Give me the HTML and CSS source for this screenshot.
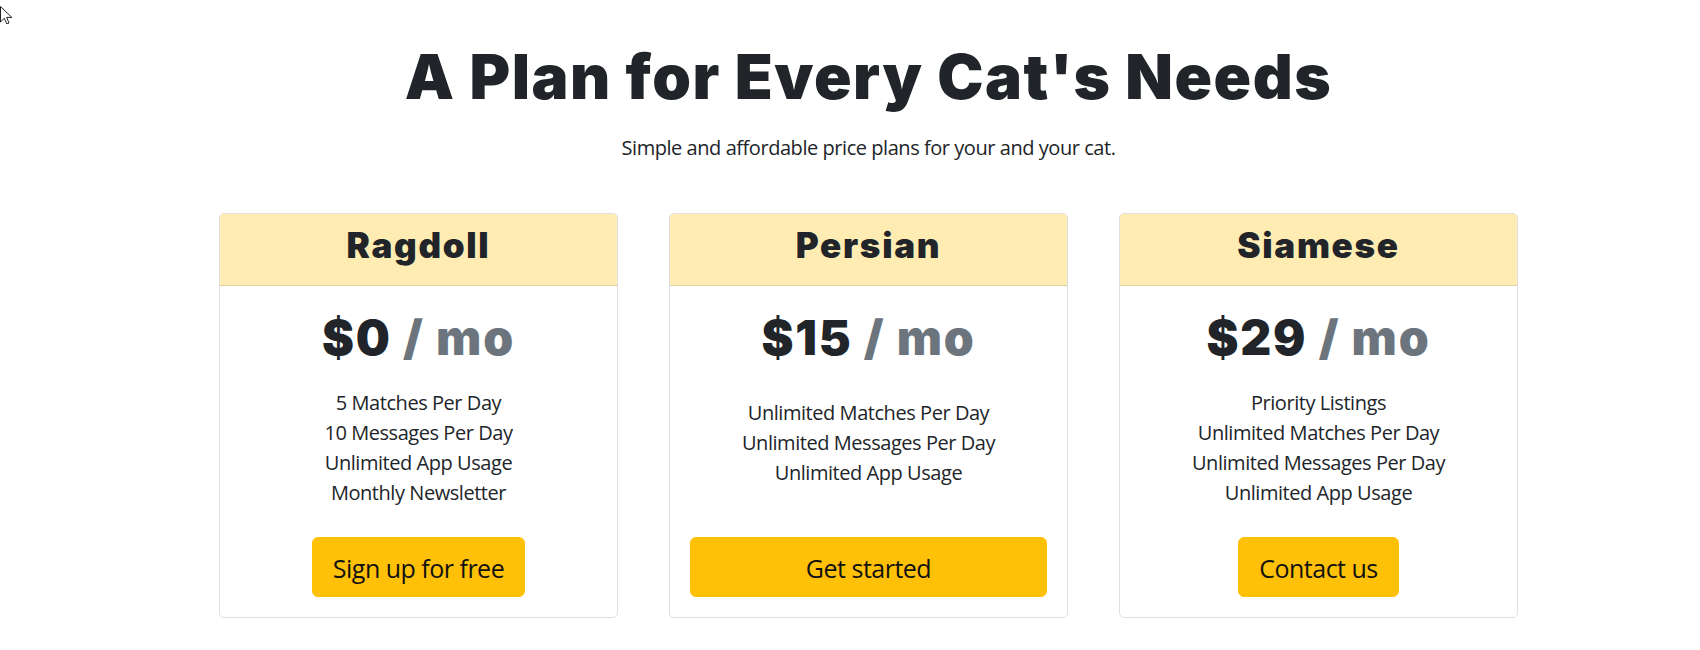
FILE: index.html
```html
<!DOCTYPE html>
<html lang="en">
<head>
<meta charset="utf-8">
<title>Pricing</title>
<link rel="stylesheet" href="styles.css">
</head>
<body>
<svg class="cursor" width="14" height="24" viewBox="0 0 14 24" aria-hidden="true">
  <path d="M0.5 6.5 L0.5 22 L4.3 18.3 L6.8 24 L9 23 L6.6 17.4 L11.8 17.4 Z" fill="#fff" stroke="#222" stroke-width="1" stroke-linejoin="round"/>
</svg>
<main class="page">
  <header class="intro">
    <h1 class="intro-title">A Plan for Every Cat's Needs</h1>
    <p class="intro-sub">Simple and affordable price plans for your and your cat.</p>
  </header>
  <section class="plans">
    <article class="plan">
      <div class="plan-head"><h3 class="plan-name">Ragdoll</h3></div>
      <div class="plan-body">
        <h2 class="plan-price">$0 <span class="per">/ mo</span></h2>
        <ul class="features">
          <li>5 Matches Per Day</li>
          <li>10 Messages Per Day</li>
          <li>Unlimited App Usage</li>
          <li>Monthly Newsletter</li>
        </ul>
        <button class="btn">Sign up for free</button>
      </div>
    </article>
    <article class="plan">
      <div class="plan-head"><h3 class="plan-name">Persian</h3></div>
      <div class="plan-body">
        <h2 class="plan-price">$15 <span class="per">/ mo</span></h2>
        <ul class="features">
          <li>Unlimited Matches Per Day</li>
          <li>Unlimited Messages Per Day</li>
          <li>Unlimited App Usage</li>
        </ul>
        <button class="btn btn-block">Get started</button>
      </div>
    </article>
    <article class="plan">
      <div class="plan-head"><h3 class="plan-name">Siamese</h3></div>
      <div class="plan-body">
        <h2 class="plan-price">$29 <span class="per">/ mo</span></h2>
        <ul class="features">
          <li>Priority Listings</li>
          <li>Unlimited Matches Per Day</li>
          <li>Unlimited Messages Per Day</li>
          <li>Unlimited App Usage</li>
        </ul>
        <button class="btn">Contact us</button>
      </div>
    </article>
  </section>
</main>
</body>
</html>
```

FILE: styles.css
```css
* { box-sizing: border-box; }

html, body {
  margin: 0;
  background: #fff;
}

body {
  font-family: "Open Sans", "Noto Sans", sans-serif;
  font-size: 20px;
  line-height: 30px;
  letter-spacing: -0.45px;
  color: #212529;
  padding-left: 37px;
}

.cursor {
  position: absolute;
  left: 0;
  top: 0;
}

.page {
  width: 1299px;
  margin: 0 auto;
  padding-top: 38px;
}

.intro {
  text-align: center;
}

.intro-title {
  margin: 0;
  font-family: "Inter", "Liberation Sans", sans-serif;
  font-weight: 900;
  font-size: 62px;
  line-height: 77px;
  letter-spacing: 1.5px;
  color: #212529;
}

.intro-sub {
  margin: 18px 0 0;
  font-size: 20px;
  line-height: 30px;
}

.plans {
  margin-top: 50px;
  display: grid;
  grid-template-columns: repeat(3, 399px);
  column-gap: 51px;
  align-items: stretch;
}

.plan {
  display: flex;
  flex-direction: column;
  border: 1px solid #dfdfdf;
  border-radius: 5px;
  overflow: hidden;
  text-align: center;
}

.plan-head {
  background: #ffecb3;
  border-bottom: 1px solid #dfcf9d;
  padding: 10px 20px 19px;
}

.plan-name {
  margin: 0;
  font-family: "Inter", "Liberation Sans", sans-serif;
  font-weight: 900;
  font-size: 35px;
  line-height: 42px;
  letter-spacing: 1.7px;
  color: #212529;
}

.plan-body {
  flex: 1;
  display: flex;
  flex-direction: column;
  padding: 20px;
}

.plan-price {
  margin: 2px 0 0;
  font-family: "Inter", "Liberation Sans", sans-serif;
  font-weight: 900;
  font-size: 48px;
  line-height: 60px;
  letter-spacing: 1.8px;
  color: #212529;
}

.per {
  color: #6c757d;
}

.features {
  list-style: none;
  margin: auto 0;
  padding: 20px 0 29px;
}

.btn {
  margin-top: auto;
  align-self: center;
  font-family: "Open Sans", "Noto Sans", sans-serif;
  font-size: 25px;
  line-height: 37.5px;
  letter-spacing: -0.5px;
  padding: 12px 20px 8px;
  background: #ffc107;
  border: 1px solid #ffc107;
  border-radius: 6px;
  color: #111;
  cursor: pointer;
}

.btn-block {
  align-self: stretch;
}
```
